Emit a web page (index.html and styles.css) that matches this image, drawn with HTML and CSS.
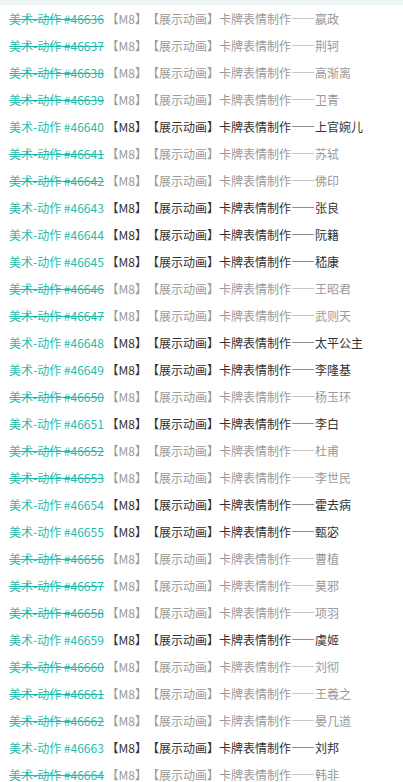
FILE: index.html
```html
<!DOCTYPE html>
<html lang="zh-CN">
<head>
    <meta charset="UTF-8">
    <meta name="viewport" content="width=device-width, initial-scale=1.0">
    <title>任务列表</title>
    <link rel="stylesheet" href="styles.css">
</head>
<body>
    <div class="top-bar"></div>
    <ul class="task-list">
        <li class="done"><a href="#">美术-动作 #46636</a> <span>【M8】【展示动画】卡牌表情制作——嬴政</span></li>
        <li class="done"><a href="#">美术-动作 #46637</a> <span>【M8】【展示动画】卡牌表情制作——荆轲</span></li>
        <li class="done"><a href="#">美术-动作 #46638</a> <span>【M8】【展示动画】卡牌表情制作——高渐离</span></li>
        <li class="done"><a href="#">美术-动作 #46639</a> <span>【M8】【展示动画】卡牌表情制作——卫青</span></li>
        <li><a href="#">美术-动作 #46640</a> <span>【M8】【展示动画】卡牌表情制作——上官婉儿</span></li>
        <li class="done"><a href="#">美术-动作 #46641</a> <span>【M8】【展示动画】卡牌表情制作——苏轼</span></li>
        <li class="done"><a href="#">美术-动作 #46642</a> <span>【M8】【展示动画】卡牌表情制作——佛印</span></li>
        <li><a href="#">美术-动作 #46643</a> <span>【M8】【展示动画】卡牌表情制作——张良</span></li>
        <li><a href="#">美术-动作 #46644</a> <span>【M8】【展示动画】卡牌表情制作——阮籍</span></li>
        <li><a href="#">美术-动作 #46645</a> <span>【M8】【展示动画】卡牌表情制作——嵇康</span></li>
        <li class="done"><a href="#">美术-动作 #46646</a> <span>【M8】【展示动画】卡牌表情制作——王昭君</span></li>
        <li class="done"><a href="#">美术-动作 #46647</a> <span>【M8】【展示动画】卡牌表情制作——武则天</span></li>
        <li><a href="#">美术-动作 #46648</a> <span>【M8】【展示动画】卡牌表情制作——太平公主</span></li>
        <li><a href="#">美术-动作 #46649</a> <span>【M8】【展示动画】卡牌表情制作——李隆基</span></li>
        <li class="done"><a href="#">美术-动作 #46650</a> <span>【M8】【展示动画】卡牌表情制作——杨玉环</span></li>
        <li><a href="#">美术-动作 #46651</a> <span>【M8】【展示动画】卡牌表情制作——李白</span></li>
        <li class="done"><a href="#">美术-动作 #46652</a> <span>【M8】【展示动画】卡牌表情制作——杜甫</span></li>
        <li class="done"><a href="#">美术-动作 #46653</a> <span>【M8】【展示动画】卡牌表情制作——李世民</span></li>
        <li><a href="#">美术-动作 #46654</a> <span>【M8】【展示动画】卡牌表情制作——霍去病</span></li>
        <li><a href="#">美术-动作 #46655</a> <span>【M8】【展示动画】卡牌表情制作——甄宓</span></li>
        <li class="done"><a href="#">美术-动作 #46656</a> <span>【M8】【展示动画】卡牌表情制作——曹植</span></li>
        <li class="done"><a href="#">美术-动作 #46657</a> <span>【M8】【展示动画】卡牌表情制作——莫邪</span></li>
        <li class="done"><a href="#">美术-动作 #46658</a> <span>【M8】【展示动画】卡牌表情制作——项羽</span></li>
        <li><a href="#">美术-动作 #46659</a> <span>【M8】【展示动画】卡牌表情制作——虞姬</span></li>
        <li class="done"><a href="#">美术-动作 #46660</a> <span>【M8】【展示动画】卡牌表情制作——刘彻</span></li>
        <li class="done"><a href="#">美术-动作 #46661</a> <span>【M8】【展示动画】卡牌表情制作——王羲之</span></li>
        <li class="done"><a href="#">美术-动作 #46662</a> <span>【M8】【展示动画】卡牌表情制作——晏几道</span></li>
        <li><a href="#">美术-动作 #46663</a> <span>【M8】【展示动画】卡牌表情制作——刘邦</span></li>
        <li class="done"><a href="#">美术-动作 #46664</a> <span>【M8】【展示动画】卡牌表情制作——韩非</span></li>
    </ul>
</body>
</html>
```

FILE: styles.css
```css
body {
    margin: 0;
    background-color: #fff;
    font-family: "Noto Sans CJK SC", "Noto Sans", sans-serif;
    font-size: 12px;
    color: #333;
    text-spacing-trim: space-all;
}
.top-bar {
    height: 5px;
    background-color: #eef3f6;
}
.task-list {
    list-style: none;
    margin: 0;
    padding: 0 0 0 9px;
}
.task-list li {
    height: 27px;
    line-height: 27px;
    white-space: nowrap;
}
.task-list a {
    color: #1fbcae;
    text-decoration: none;
}
.task-list li.done a {
    text-decoration: line-through;
}
.task-list li.done span {
    color: #9a9a9a;
}
```
